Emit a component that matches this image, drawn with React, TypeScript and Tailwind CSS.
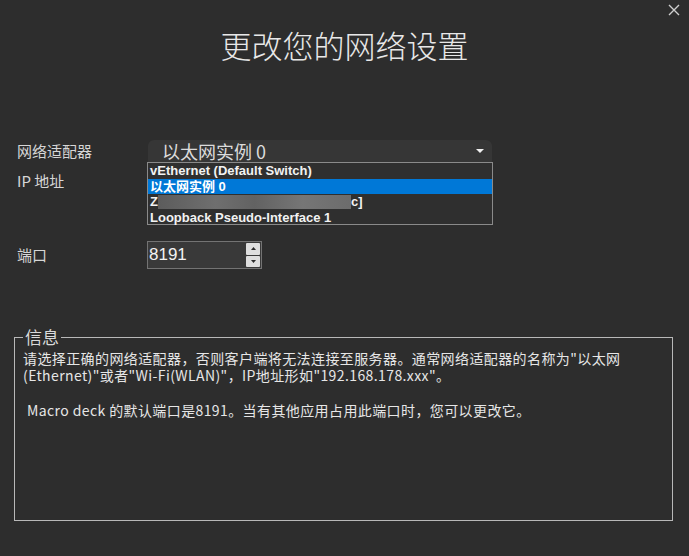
import React from "react";

export default function App() {
  return (
    <div className="relative w-[689px] h-[556px] overflow-hidden bg-[#2d2d2d] font-['Noto_Sans_CJK_SC',sans-serif] text-[#e4e4e4]">
      {/* window close */}
      <button className="absolute right-[9px] top-[4px] w-[12px] h-[12px]">
        <svg width="12" height="12" viewBox="0 0 12 12">
          <path d="M1 1 L11 11 M11 1 L1 11" stroke="#cfcfcf" strokeWidth="1.4" />
        </svg>
      </button>

      <h1 className="pt-[27px] text-center text-[31px] leading-[36px] font-light text-[#e8e8e8]">
        更改您的网络设置
      </h1>

      {/* Row: adapter */}
      <div className="mt-[77px] flex items-center h-[22px]">
        <div className="w-[147px] pl-[17px] text-[15px] leading-[20px] text-[#d6d6d6]">网络适配器</div>
        <div className="relative w-[344px] h-[22px] ml-[1px]">
          <div className="flex items-center justify-between h-[22px] rounded-t-[6px] bg-[#363636] pl-[14px] pr-[8px]">
            <span className="text-[18px] leading-[22px] text-[#dcdcdc]">以太网实例 0</span>
            <svg width="8" height="4" viewBox="0 0 8 4">
              <path d="M0 0 L8 0 L4 4 Z" fill="#f0f0f0" />
            </svg>
          </div>
          {/* open list */}
          <div className="absolute left-[-1px] top-full w-[346px] h-[63px] border border-[#8a8a8a] bg-[#2f2f2f] font-['Liberation_Sans','Noto_Sans_CJK_SC',sans-serif] text-[13px] font-bold leading-[15.5px] text-[#f2f2f2] z-10">
            <div className="h-[15.5px] pl-[2px] whitespace-nowrap">vEthernet (Default Switch)</div>
            <div className="h-[15.5px] pl-[2px] bg-[#0078d7] text-white whitespace-nowrap">以太网实例 0</div>
            <div className="h-[15.5px] pl-[2px] flex items-center whitespace-nowrap">
              <span>Z</span>
              <span className="inline-block w-[193px] h-[14px] bg-[linear-gradient(90deg,#5c5c5c_0%,#6f6f6f_30%,#626262_50%,#767676_75%,#6c6c6c_100%)]" />
              <span>c]</span>
            </div>
            <div className="h-[15.5px] pl-[2px] whitespace-nowrap">Loopback Pseudo-Interface 1</div>
          </div>
        </div>
      </div>

      {/* Row: IP */}
      <div className="mt-[8px] flex items-center h-[22px]">
        <div className="w-[147px] pl-[17px] text-[15px] leading-[20px] text-[#d6d6d6]">IP 地址</div>
      </div>

      {/* Row: port */}
      <div className="mt-[49px] flex items-center h-[28px]">
        <div className="w-[147px] pl-[17px] text-[15px] leading-[20px] text-[#d6d6d6]">端口</div>
        <div className="flex w-[115px] h-[28px] border border-[#737373] bg-[#393939]">
          <div className="flex-1 pl-[1px] font-['Liberation_Sans',sans-serif] text-[17px] leading-[26px] text-[#f2f2f2]">8191</div>
          <div className="flex flex-col w-[14px] my-[1px] mr-[1px] gap-[1px]">
            <div className="flex-1 flex items-center justify-center bg-[#dedede] rounded-[1px]">
              <svg width="5" height="3" viewBox="0 0 5 3"><path d="M0 3 L5 3 L2.5 0 Z" fill="#2a2a2a" /></svg>
            </div>
            <div className="flex-1 flex items-center justify-center bg-[#dedede] rounded-[1px]">
              <svg width="5" height="3" viewBox="0 0 5 3"><path d="M0 0 L5 0 L2.5 3 Z" fill="#2a2a2a" /></svg>
            </div>
          </div>
        </div>
      </div>

      {/* Info group */}
      <fieldset className="mt-[58px] ml-[14px] w-[659px] h-[194px] border border-[#b8b8b8]">
        <legend className="ml-[8px] px-[2px] text-[17px] leading-[20px] text-[#dadada]">信息</legend>
        <div className="pt-[3px] pl-[8px] text-[14px] leading-[17px] tracking-[0.4px] text-[#e6e6e6]">
          <p>
            请选择正确的网络适配器，否则客户端将无法连接至服务器。通常网络适配器的名称为"以太网
            <br />
            (Ethernet)"或者"Wi-Fi(WLAN)"，IP地址形如"192.168.178.xxx"。
          </p>
          <p className="mt-[18px] pl-[4px]">Macro deck 的默认端口是8191。当有其他应用占用此端口时，您可以更改它。</p>
        </div>
      </fieldset>
    </div>
  );
}
